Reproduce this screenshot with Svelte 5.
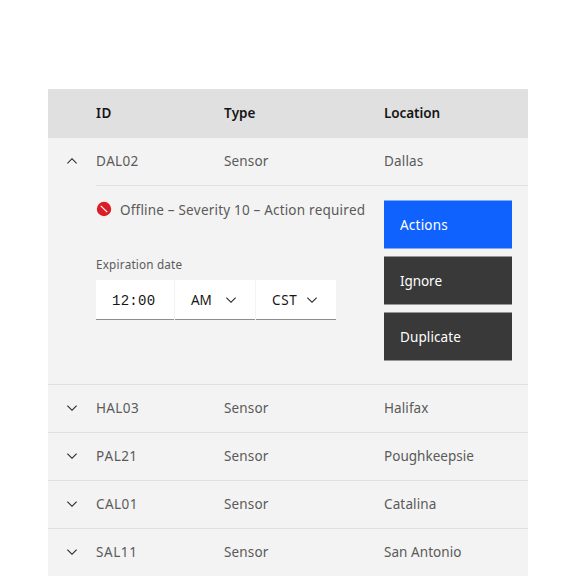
<script>
  const head = [['ID', 16], ['Type', 31.5], ['Location', 56]];
  const first = [['DAL02', 42.5], ['Sensor', 44.5], ['Dallas', 39.5]];
  const rows = [
    [['HAL03', 43], ['Sensor', 44.5], ['Halifax', 44.5]],
    [['PAL21', 41.5], ['Sensor', 44.5], ['Poughkeepsie', 90]],
    [['CAL01', 42], ['Sensor', 44.5], ['Catalina', 52.5]],
    [['SAL11', 41.5], ['Sensor', 44.5], ['San Antonio', 77.5]]
  ];
  const actions = [['Actions', 48, 'primary'], ['Ignore', 42, 'secondary'], ['Duplicate', 61, 'secondary']];

  // Tracks a label so that it spans the given width.
  function fit(node, width) {
    const natural = node.getBoundingClientRect().width;
    node.style.letterSpacing = `${(width - natural) / node.textContent.length}px`;
  }
</script>

{#snippet label(text, width)}<span class="label" use:fit={width}>{text}</span>{/snippet}

{#snippet chevron(up)}
  <svg class="chevron" class:up width="16" height="16" viewBox="0 0 16 16" aria-hidden="true">
    <path d="M8 11 3 6l.7-.7L8 9.6l4.3-4.3.7.7z" />
  </svg>
{/snippet}

{#snippet cells(items)}
  {#each items as [text, width]}
    <div class="cell">{@render label(text, width)}</div>
  {/each}
{/snippet}

<main>
  <div class="table">
    <div class="row head"><div></div>{@render cells(head)}</div>
    <div class="row open">
      <div class="toggle">{@render chevron(true)}</div>
      {@render cells(first)}
    </div>
    <div class="detail">
      <div class="info">
        <div class="status">
          <svg width="16" height="16" viewBox="0 0 16 16" aria-hidden="true">
            <circle cx="8" cy="8" r="7.2" fill="#da1e28" />
            <path d="m4.8 4.8 6.4 6.4" stroke="#fff" stroke-width="1.2" />
          </svg>
          {@render label('Offline – Severity 10 – Action required', 245.3)}
        </div>
        <div class="caption">{@render label('Expiration date', 86.3)}</div>
        <div class="time">
          <div class="field clock">{@render label('12:00', 43.3)}</div>
          <div class="field">{@render label('AM', 20.5)}{@render chevron(false)}</div>
          <div class="field">{@render label('CST', 25.3)}{@render chevron(false)}</div>
        </div>
      </div>
      <div class="actions">
        {#each actions as [text, width, kind]}
          <button class={kind}>{@render label(text, width)}</button>
        {/each}
      </div>
    </div>
    {#each rows as row}
      <div class="row">
        <div class="toggle">{@render chevron(false)}</div>
        {@render cells(row)}
      </div>
    {/each}
  </div>
</main>

<style>
  :global(body) { background: #fff; overflow: hidden; }
  main {
    padding: 89px 48px 0;
    height: 488px;
    font: 13.5px/18px "Noto Sans", sans-serif;
    color: #5a5a5a;
  }
  .table { background: #f3f3f3; height: 487px; overflow: hidden; }
  .row {
    display: grid;
    grid-template-columns: 48px 128px 160px 144px;
    align-items: center;
    box-sizing: border-box;
    height: 48px;
    padding-bottom: 1px;
    border-bottom: 1px solid #e0e0e0;
  }
  .row:last-child { border-bottom-color: transparent; }
  .row.head { height: 49px; padding: 0; background: #e0e0e0; color: #161616; font-weight: 600; }
  .row.open { height: 47px; border: 0; }
  .label { display: inline-block; white-space: nowrap; font-kerning: none; }
  .toggle { display: flex; justify-content: center; }
  .chevron { display: block; fill: #262626; flex: none; }
  .up { transform: rotate(180deg); }
  .detail {
    display: flex;
    height: 200px;
    box-sizing: border-box;
    border-bottom: 1px solid #e0e0e0;
    padding-left: 48px;
    background: linear-gradient(#e0e0e0, #e0e0e0) 48px 0 / 432px 1px no-repeat;
  }
  .info { width: 288px; padding-top: 16px; }
  .status { display: flex; gap: 8px; height: 18px; }
  .caption { margin-top: 36px; height: 18px; font-size: 11.7px; }
  .time { display: flex; gap: 1px; margin-top: 7px; color: #161616; }
  .field {
    display: flex;
    align-items: center;
    justify-content: space-between;
    box-sizing: border-box;
    width: 80px;
    height: 40px;
    padding: 0 16px;
    background: #fff;
    border-bottom: 1px solid #8d8d8d;
  }
  .clock { width: 78px; padding-top: 2px; font: 14px/18px "Liberation Mono", monospace; }
  .actions { display: flex; flex-direction: column; gap: 7px; padding-top: 15px; width: 128px; }
  button {
    height: 49px;
    box-sizing: border-box;
    padding: 0 16px;
    text-align: left;
    font: inherit;
    color: #fff;
    border: solid;
    border-width: 1px 0;
  }
  .primary { background: #0f62fe; border-color: #81aafa; }
  .secondary { background: #393939; border-color: #969696; }
</style>
